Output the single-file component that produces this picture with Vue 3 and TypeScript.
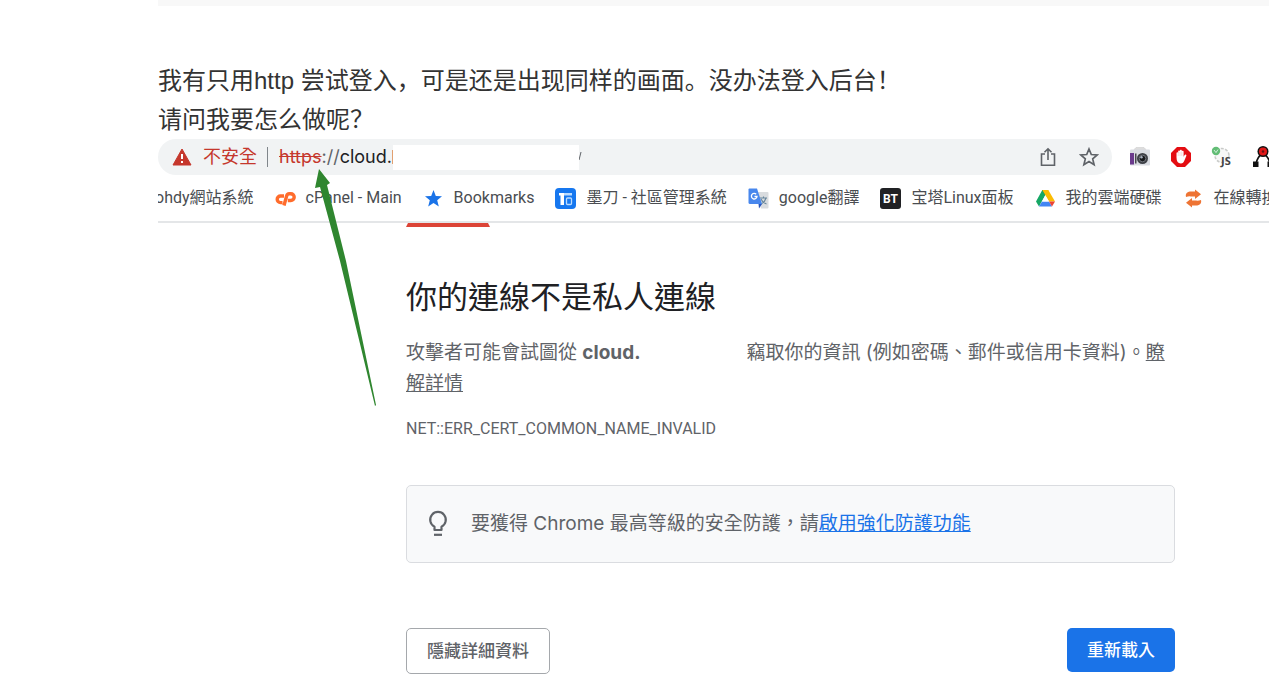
<script setup lang="ts">
interface Bookmark {
  icon: string
  label: string
}

const bookmarks: Bookmark[] = [
  { icon: 'cpanel', label: 'cPanel - Main' },
  { icon: 'star', label: 'Bookmarks' },
  { icon: 'modao', label: '墨刀 - 社區管理系統' },
  { icon: 'translate', label: 'google翻譯' },
  { icon: 'bt', label: '宝塔Linux面板' },
  { icon: 'drive', label: '我的雲端硬碟' },
  { icon: 'convert', label: '在線轉換' },
]
</script>

<template>
  <main class="post">
    <div class="divider"></div>
    <p class="message" lang="zh-CN">
      我有只用http 尝试登入，可是还是出现同样的画面。没办法登入后台！<br />请问我要怎么做呢？
    </p>

    <section class="shot" lang="zh-TW">
      <div class="toolbar">
        <div class="omnibox">
          <svg class="warn" viewBox="0 0 20 18" aria-hidden="true">
            <path d="M10 1 19 17H1z" fill="#c5372c" stroke="#c5372c" stroke-linejoin="round" />
            <path d="M9 6h2v5H9zM9 13h2v2H9z" fill="#fff" />
          </svg>
          <span class="insecure">不安全</span>
          <span class="bar"></span>
          <span class="url"><s>https</s><span class="sep">://</span>cloud.</span>
          <span class="sliver"></span>
          <span class="mask"></span>
          <svg class="tail" viewBox="0 0 4 10" aria-hidden="true">
            <path d="M2 0 0 8" stroke="#5f6368" fill="none" />
          </svg>
          <button class="tool share" aria-label="分享">
            <svg viewBox="0 0 20 20" fill="none" stroke="#5f6368" stroke-width="1.6">
              <path d="M7 7H3.500v11.200h13V7H13M10 13V2M6.500 5.300 10 1.800l3.500 3.500" />
            </svg>
          </button>
          <button class="tool" aria-label="加入書籤">
            <svg viewBox="0 0 20 20" fill="none" stroke="#5f6368" stroke-width="1.700">
              <path d="m10 2 2.300 5.500 5.900.5-4.500 3.900 1.400 5.800L10 14.600l-5.100 3.100 1.400-5.800L1.800 8l5.900-.5z" />
            </svg>
          </button>
        </div>
        <div class="extensions">
          <button class="ext" aria-label="截圖">
            <svg viewBox="0 0 22 22">
              <path d="M5 3.500 7 1.500h8l2 2z" fill="#ddd" stroke="#c8c8c8" stroke-width=".5" />
              <rect x="1" y="3.500" width="20" height="16" rx="1" fill="#d9dce2" />
              <rect x="1" y="7" width="4" height="11.500" fill="#6a3a8c" />
              <rect x="6" y="7.500" width="1.500" height="10" fill="#46464c" />
              <circle cx="13.500" cy="12.500" r="5.500" fill="#3d4046" />
              <circle cx="13.500" cy="12.500" r="3.300" fill="#16181c" stroke="#6f747c" />
              <circle cx="12.500" cy="11.300" r="1.200" fill="#aab4c4" />
            </svg>
          </button>
          <button class="ext" aria-label="廣告攔截">
            <svg viewBox="0 0 22 22">
              <path d="M7 1h8l6 6v8l-6 6H7l-6-6V7z" fill="#e40d12" />
              <path d="M6.500 11.500V7.300c0-1.300 1.700-1.300 1.700 0V5.500c0-1.300 1.800-1.300 1.800 0V4.700c0-1.300 1.800-1.300 1.800 0v1c0-1.300 1.800-1.300 1.800 0v5l1-1.600c.8-1.200 2.200-.4 1.700.8l-2 4.900c-.6 1.600-1.600 2.600-3.500 2.600-2.800 0-4.300-2-4.300-5.900z" fill="#fff" />
              <path d="M8.200 7v3M10 6v4M11.800 6v4" stroke="#f3a2a2" stroke-width=".4" />
            </svg>
          </button>
          <button class="ext" aria-label="JS">
            <svg viewBox="0 0 22 22">
              <circle cx="11" cy="9.500" r="7" fill="#f7f7f7" stroke="#c9cbc9" stroke-width="1.500" stroke-dasharray="3 1.500" />
              <circle cx="5" cy="5" r="4.200" fill="#63bd76" />
              <path d="m3 4 2 2.600L7 3.500" fill="none" stroke="#d3f0db" />
              <text x="10" y="18.500" class="js">JS</text>
            </svg>
          </button>
          <button class="ext" aria-label="節點工具">
            <svg viewBox="0 0 22 22">
              <path d="M4 18Q5 11 11 7Q17 11 18 18" fill="none" stroke="#111" stroke-width="1.600" />
              <path d="M1 15.500h5.500V21H1zM15.500 15.500H21V21h-5.500z" fill="#111" />
              <circle cx="11" cy="5.500" r="5.500" fill="#111" />
              <circle cx="11" cy="5.500" r="4" fill="#e01919" />
              <circle cx="11" cy="5.500" r="1.200" fill="#611" />
            </svg>
          </button>
        </div>
      </div>

      <nav class="bookmarks">
        <a href="#" class="bookmark cut">ohdy網站系統</a>
        <a v-for="item in bookmarks" :key="item.label" href="#" class="bookmark">
          <svg v-if="item.icon === 'cpanel'" class="icon" viewBox="0 0 21 21" fill="none" stroke="#ff6c2c" stroke-width="3.400">
            <path d="M9 8H5.500a3.300 3.300 0 0 0 0 6.600H7.500M9 17.500l2.600-9.500q.6-2.300 2.500-2.300h1.700a3.300 3.300 0 0 1 0 6.800h-3" />
          </svg>
          <svg v-else-if="item.icon === 'star'" class="icon" viewBox="0 0 21 21">
            <path d="m10.500 2 2.300 5.900 6.200.4-4.800 4 1.600 6.200-5.300-3.400-5.300 3.400 1.600-6.200L2 8.300l6.200-.4z" fill="#1a73e8" />
          </svg>
          <svg v-else-if="item.icon === 'modao'" class="icon" viewBox="0 0 21 21">
            <rect width="21" height="21" rx="4" fill="#1677ef" />
            <path d="M4 5h5v12H5.500V7.500H4z" fill="#fff" />
            <path d="M9 5h8v2.500H9z" fill="#b9dbff" />
            <rect x="11.500" y="10" width="5" height="6.500" rx="1" fill="none" stroke="#b9dbff" stroke-width="1.300" />
          </svg>
          <svg v-else-if="item.icon === 'translate'" class="icon" viewBox="0 0 21 21">
            <path d="M9 4h10.500q1 0 1 1v14.500q0 1-1 1H13z" fill="#d9dcdf" />
            <path d="M12 10h7M15.500 8.500V10M18 10q-1 4-5 6M13 11q2 4 5.500 5" fill="none" stroke="#65849b" stroke-width="1.100" />
            <path d="M1.500.5H9l5 15.500H2q-1.500 0-1.500-1.500v-13q0-1 1-1z" fill="#4887ed" />
            <path d="M10.500 16H14l-3 4.500z" fill="#2a56bd" />
            <path d="M8.200 6.200A2.800 2.800 0 1 0 9 8.500H6.500" fill="none" stroke="#fff" stroke-width="1.300" />
          </svg>
          <svg v-else-if="item.icon === 'bt'" class="icon" viewBox="0 0 21 21">
            <rect width="21" height="21" rx="3" fill="#202124" />
            <text x="10.500" y="15" text-anchor="middle" class="bt">BT</text>
          </svg>
          <svg v-else-if="item.icon === 'drive'" class="icon" viewBox="0 0 21 21">
            <path d="M7.300 2h6L7 13l-3 5.500-3-5z" fill="#16a765" />
            <path d="M7.300 2h6l-3 5.300z" fill="#0b8043" />
            <path d="M7.300 2h6L20 13.500h-6z" fill="#fbbc04" />
            <path d="M7 13.500h7l3 5H4z" fill="#4285f4" />
            <path d="M14 13.500h6l-3 5z" fill="#ea4335" />
            <path d="m10.300 7.300 3.700 6.200H7z" fill="#fff" />
          </svg>
          <svg v-else class="icon" viewBox="0 0 21 21" fill="#ee7434">
            <path d="M3 9C2 5 5 3.500 8 3.500h4V1.500l6 4.800-6 4.700V8.500H8Q6 8 3 9z" />
            <path d="M18 12c1 4-2 5.500-5 5.500H9v2L3 14.700 9 10v2.500h4q2 .5 5-.5z" />
          </svg>
          <span>{{ item.label }}</span>
        </a>
      </nav>

      <div class="page">
        <div class="tab"></div>
        <h1>你的連線不是私人連線</h1>
        <p class="body">
          攻擊者可能會試圖從 <strong>cloud.</strong><span class="blank"></span>竊取你的資訊 (例如密碼、郵件或信用卡資料)。<a href="#">瞭解詳情</a>
        </p>
        <p class="code">NET::ERR_CERT_COMMON_NAME_INVALID</p>
        <div class="hint">
          <svg class="bulb" viewBox="0 0 24 28" fill="none" stroke="#5f6368" stroke-width="2.200">
            <path d="M8.500 20v-3.300a7.800 7.800 0 1 1 7 0V20z" stroke-linejoin="round" />
            <path d="M8 24.800h8" />
          </svg>
          <span>要獲得 Chrome 最高等級的安全防護，請<a href="#">啟用強化防護功能</a></span>
        </div>
        <div class="actions">
          <button class="details">隱藏詳細資料</button>
          <button class="reload">重新載入</button>
        </div>
      </div>

      <svg class="arrow" viewBox="0 0 62 237" aria-hidden="true">
        <path d="M5 0 16 14 13 16 32 92 62 236 61 237 26 92 6 18 1 19z" fill="#2f862f" />
      </svg>
    </section>
  </main>
</template>

<style>
body {
  margin: 0;
  background: #fff;
  overflow: hidden;
}
</style>

<style scoped>
.post {
  padding-left: 158px;
  overflow: hidden;
}
.divider {
  height: 6px;
  background: #f8f8f8;
}
.message {
  margin: 55px 0 0;
  font: 24px/39px "Liberation Sans", "Noto Sans CJK SC", sans-serif;
  color: #333;
}
.shot {
  position: relative;
  font-family: Roboto, "Noto Sans CJK TC", sans-serif;
  color: #5f6368;
}
button {
  padding: 0;
  border: 0;
  background: none;
  font-family: inherit;
}
svg {
  display: block;
}
.toolbar {
  display: flex;
  gap: 17px;
}
.omnibox {
  flex: 1;
  display: flex;
  align-items: center;
  height: 36px;
  padding: 0 13px 0 14px;
  border-radius: 18px;
  background: #f1f3f4;
  font-size: 18px;
  line-height: 36px;
  color: #202124;
}
.warn {
  width: 20px;
  height: 18px;
}
.insecure {
  margin-left: 11px;
  color: #c5372c;
}
.bar {
  width: 1px;
  height: 20px;
  margin: 0 11px 0 10px;
  background: #80868b;
}
.url {
  font-family: Inter, sans-serif;
}
.url s {
  color: #c5372c;
}
.sep {
  color: #5f6368;
}
.sliver {
  width: 1px;
  height: 14px;
  background: #e2a070;
}
.mask {
  width: 186px;
  height: 25px;
  background: #fff;
}
.tail {
  width: 4px;
  height: 10px;
  margin-right: auto;
}
.tool svg {
  width: 20px;
  height: 20px;
}
.share {
  margin-right: 21px;
}
.extensions {
  display: flex;
  align-items: center;
  gap: 19px;
  width: 140px;
  overflow: hidden;
}
.ext svg {
  width: 22px;
  height: 22px;
}
.js {
  font: bold 11px "Open Sans", sans-serif;
  fill: #444;
}
.bt {
  font: bold 12px Roboto, sans-serif;
  fill: #fff;
}
.bookmarks {
  display: flex;
  align-items: center;
  gap: 21px;
  height: 46px;
  border-bottom: 2px solid #e4e6e8;
  overflow: hidden;
}
.bookmark {
  flex: none;
  display: flex;
  align-items: center;
  gap: 10px;
  font-size: 16px;
  line-height: 24px;
  color: #4a4d51;
  text-decoration: none;
  white-space: nowrap;
}
.cut {
  margin-left: -3px;
}
.icon {
  width: 21px;
  height: 21px;
}
.page {
  padding: 0 94px 19px 248px;
}
.tab {
  width: 84px;
  height: 4px;
  background: #dc4437;
  clip-path: polygon(2px 0, 82px 0, 100% 100%, 0 100%);
}
h1 {
  margin: 51px 0 0;
  font-size: 31px;
  line-height: 40px;
  font-weight: 400;
  color: #202124;
}
.body {
  margin: 19px 0 0;
  font-family: Inter, "Noto Sans CJK TC", sans-serif;
  font-size: 19px;
  line-height: 31px;
}
.body a {
  color: inherit;
}
.blank {
  display: inline-block;
  width: 106px;
}
.code {
  margin: 20px 0 0;
  font-size: 16px;
  line-height: 20px;
}
.hint {
  display: flex;
  align-items: center;
  gap: 21px;
  margin-top: 46px;
  padding: 23px 19px;
  border: 1px solid #dadce0;
  border-radius: 5px;
  background: #f8f9fa;
  font-family: Inter, "Noto Sans CJK TC", sans-serif;
  font-size: 19px;
  line-height: 30px;
}
.bulb {
  width: 24px;
  height: 28px;
}
.hint a {
  color: #1a73e8;
}
.actions {
  display: flex;
  justify-content: space-between;
  align-items: flex-start;
  margin-top: 65px;
}
.actions button {
  font-size: 17px;
  line-height: 24px;
  font-weight: 500;
  border-radius: 5px;
}
.actions .details {
  padding: 10px 20px;
  border: 1px solid #a5a8ac;
  color: #5f6368;
}
.actions .reload {
  padding: 10px 20px;
  background: #1a73e8;
  color: #fff;
}
.arrow {
  position: absolute;
  left: 156px;
  top: 30px;
  width: 62px;
  height: 237px;
}
</style>
